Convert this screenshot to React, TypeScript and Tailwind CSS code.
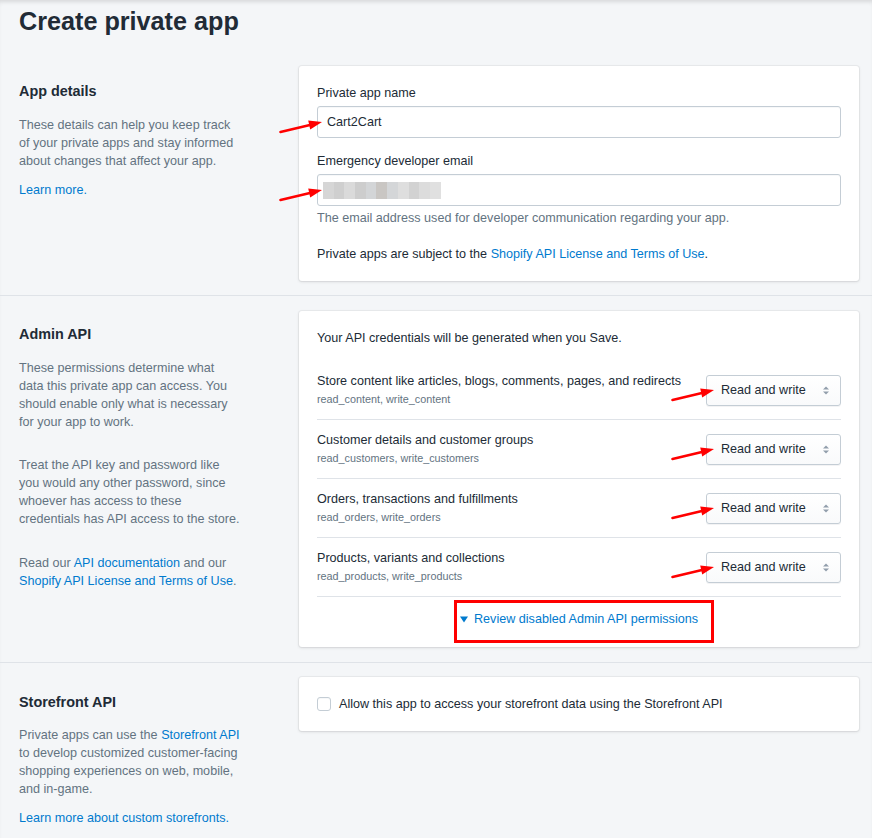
import React from "react";

const perms = [
  {
    title: "Store content like articles, blogs, comments, pages, and redirects",
    scopes: "read_content, write_content",
  },
  {
    title: "Customer details and customer groups",
    scopes: "read_customers, write_customers",
  },
  {
    title: "Orders, transactions and fulfillments",
    scopes: "read_orders, write_orders",
  },
  {
    title: "Products, variants and collections",
    scopes: "read_products, write_products",
  },
];

const blurShades = [
  "bg-[#d6d6d6]",
  "bg-[#cfcfcf]",
  "bg-[#dadada]",
  "bg-[#cdcdcd]",
  "bg-[#d3d5d7]",
  "bg-[#c9c6c3]",
  "bg-[#d4d6d8]",
  "bg-[#dedede]",
  "bg-[#d2d2d2]",
  "bg-[#dcdcdc]",
  "bg-[#e0e0e0]",
];

// red annotation arrow drawn over the screenshot
function Arrow({ className }: { className: string }) {
  return (
    <svg
      className={`pointer-events-none absolute ${className}`}
      width="44"
      height="16"
      viewBox="0 0 44 16"
    >
      <line x1="1.5" y1="13" x2="32" y2="5.8" stroke="#f00" strokeWidth="2.6" strokeLinecap="round" />
      <polygon points="43,3 31.2,10.6 29.2,1.4" fill="#f00" />
    </svg>
  );
}

function SelectBox() {
  return (
    <div className="flex h-[31px] w-[135px] shrink-0 items-center justify-between rounded-[3px] border border-[#c4cdd5] bg-gradient-to-b from-white to-[#f9fafb] pl-[14px] pr-[10px] shadow-[0_1px_0_0_rgba(22,29,37,0.05)]">
      <span className="text-[#212b36]">Read and write</span>
      <svg width="8" height="11" viewBox="0 0 8 11">
        <polygon points="4,1.5 7,4.5 1,4.5" fill="#919eab" />
        <polygon points="4,9.5 7,6.5 1,6.5" fill="#919eab" />
      </svg>
    </div>
  );
}

const card =
  "rounded-[3px] bg-white p-[18px] shadow-[0_0_0_1px_rgba(63,63,68,0.05),0_1px_3px_0_rgba(63,63,68,0.15)]";
const link = "text-[#007ace]";

export default function App() {
  return (
    <div className="relative min-h-screen bg-[#f4f6f8] font-['Liberation_Sans',Arial,sans-serif] text-[12.6px] leading-[18px] text-[#212b36] shadow-[inset_0_4px_4px_-2px_rgba(0,0,0,0.12)]">
      <h1 className="pl-[19px] pt-[5px] text-[25.2px] font-bold leading-[32px]">
        Create private app
      </h1>

      {/* App details */}
      <section className="mt-[29px] grid grid-cols-[223px_1fr] gap-[57px] border-b border-[#dfe3e8] pb-[14px] pl-[19px] pr-[13px]">
        <div className="pt-[15px]">
          <h2 className="text-[14.4px] font-bold leading-[20px]">App details</h2>
          <p className="mt-[15px] text-[#637381]">
            These details can help you keep track of your private apps and stay
            informed about changes that affect your app.
          </p>
          <p className={`mt-[11px] ${link}`}>Learn more.</p>
        </div>
        <div className={card}>
          <label className="block">Private app name</label>
          <div className="mt-[4px] flex h-[32px] items-center rounded-[3px] border border-[#c4cdd5] bg-white px-[9px] pb-[1px] shadow-[inset_0_1px_0_0_rgba(99,115,129,0.05)]">
            Cart2Cart
          </div>
          <label className="mt-[14px] block">Emergency developer email</label>
          <div className="mt-[4px] flex h-[32px] items-center rounded-[3px] border border-[#c4cdd5] bg-white px-[5px] shadow-[inset_0_1px_0_0_rgba(99,115,129,0.05)]">
            <div className="flex h-[17px]">
              {blurShades.map((c, i) => (
                <div key={i} className={`h-full w-[10.7px] ${c}`} />
              ))}
            </div>
          </div>
          <p className="mt-[3px] text-[#637381]">
            The email address used for developer communication regarding your app.
          </p>
          <p className="mt-[18px]">
            Private apps are subject to the{" "}
            <span className={link}>Shopify API License and Terms of Use</span>.
          </p>
        </div>
      </section>

      {/* Admin API */}
      <section className="grid grid-cols-[223px_1fr] gap-[57px] border-b border-[#dfe3e8] pb-[15px] pl-[19px] pr-[13px] pt-[15px]">
        <div className="pt-[13px]">
          <h2 className="text-[14.4px] font-bold leading-[20px]">Admin API</h2>
          <p className="mt-[15px] text-[#637381]">
            These permissions determine what data this private app can access.
            You should enable only what is necessary for your app to work.
          </p>
          <p className="mt-[25px] text-[#637381]">
            Treat the API key and password like you would any other password,
            since whoever has access to these credentials has API access to the
            store.
          </p>
          <p className="mt-[26px] text-[#637381]">
            Read our <span className={link}>API documentation</span> and our{" "}
            <span className={link}>Shopify API License and Terms of Use</span>.
          </p>
        </div>
        <div className={card}>
          <p>Your API credentials will be generated when you Save.</p>
          <div className="mt-[14px] border-b border-[#dfe3e8]">
            {perms.map((p, i) => (
              <div
                key={p.scopes}
                className={`flex items-center justify-between ${
                  i > 0 ? "h-[59px] border-t border-[#dfe3e8]" : "h-[58px]"
                }`}
              >
                <div>
                  <div>{p.title}</div>
                  <div className="text-[10.8px] text-[#637381]">{p.scopes}</div>
                </div>
                <SelectBox />
              </div>
            ))}
          </div>
          <div className="flex items-center justify-center gap-[6px] pb-[1px] pt-[13px]">
            <svg width="8" height="7" viewBox="0 0 8 7">
              <polygon points="0,0.5 8,0.5 4,6.5" fill="#007ace" />
            </svg>
            <span className={link}>Review disabled Admin API permissions</span>
          </div>
        </div>
      </section>

      {/* Storefront API */}
      <section className="grid grid-cols-[223px_1fr] items-start gap-[57px] pb-[12px] pl-[19px] pr-[13px] pt-[14px]">
        <div className="pt-[15px]">
          <h2 className="text-[14.4px] font-bold leading-[20px]">Storefront API</h2>
          <p className="mt-[14px] text-[#637381]">
            Private apps can use the <span className={link}>Storefront API</span>{" "}
            to develop customized customer-facing shopping experiences on web,
            mobile, and in-game.
          </p>
          <p className={`mt-[11px] ${link}`}>Learn more about custom storefronts.</p>
        </div>
        <div className={`${card} flex items-center gap-[8px]`}>
          <span className="h-[14px] w-[14px] shrink-0 rounded-[3px] border border-[#c4cdd5] bg-white shadow-[inset_0_1px_0_0_rgba(99,115,129,0.05)]" />
          <span>Allow this app to access your storefront data using the Storefront API</span>
        </div>
      </section>

      {/* annotations */}
      <Arrow className="left-[279px] top-[119px]" />
      <Arrow className="left-[279px] top-[187px]" />
      <Arrow className="left-[671px] top-[387px]" />
      <Arrow className="left-[671px] top-[446px]" />
      <Arrow className="left-[671px] top-[505px]" />
      <Arrow className="left-[671px] top-[564px]" />
      <div className="pointer-events-none absolute left-[454px] top-[600px] h-[43px] w-[260px] border-[3px] border-[#f00]" />
    </div>
  );
}
